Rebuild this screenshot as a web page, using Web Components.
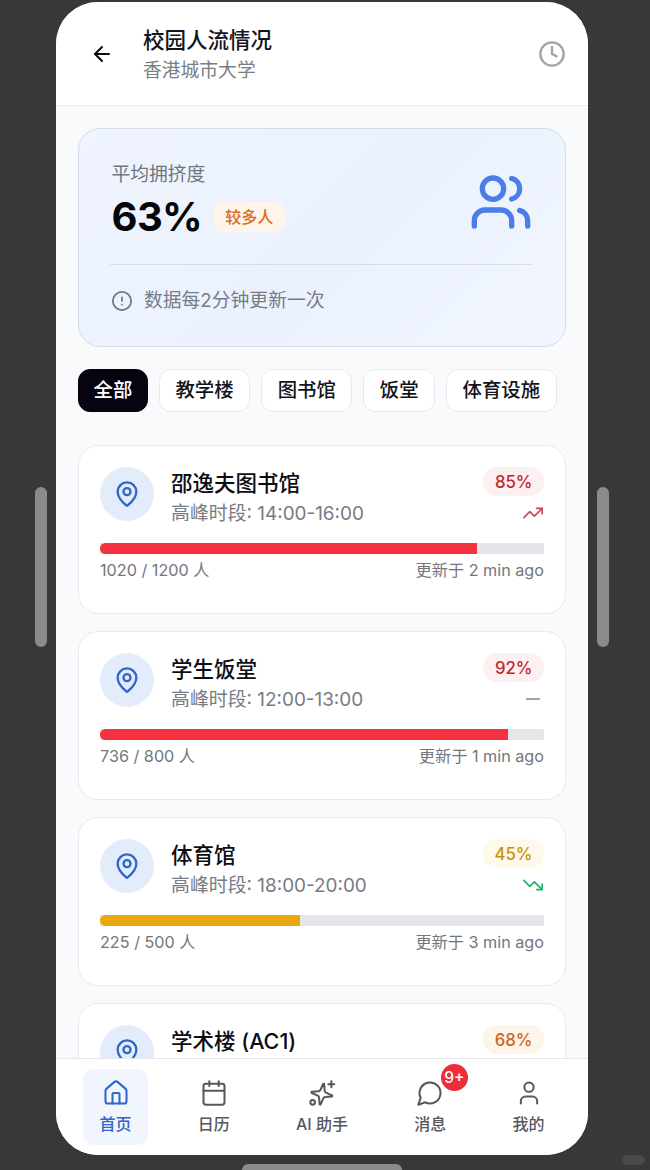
<!DOCTYPE html>
<html lang="zh">
<head>
<meta charset="utf-8">
<title>校园人流情况</title>
<style>
    html, body { margin: 0; height: 100%; background: #383838; overflow: hidden; }
    body { font-family: Inter, "Noto Sans CJK SC", sans-serif; }
</style>
</head>
<body>
<phone-stage>
    <campus-header title-text="校园人流情况" sub-text="香港城市大学"></campus-header>
    <summary-card percent="63%" level="较多人" label="平均拥挤度" note="数据每2分钟更新一次"></summary-card>
    <filter-tabs>
        <filter-tab active>全部</filter-tab>
        <filter-tab>教学楼</filter-tab>
        <filter-tab>图书馆</filter-tab>
        <filter-tab>饭堂</filter-tab>
        <filter-tab>体育设施</filter-tab>
    </filter-tabs>
    <place-card name="邵逸夫图书馆" peak="高峰时段: 14:00-16:00" count="1020 / 1200 人" updated="更新于 2 min ago" percent="85" level="high" trend="up"></place-card>
    <place-card name="学生饭堂" peak="高峰时段: 12:00-13:00" count="736 / 800 人" updated="更新于 1 min ago" percent="92" level="high" trend="flat"></place-card>
    <place-card name="体育馆" peak="高峰时段: 18:00-20:00" count="225 / 500 人" updated="更新于 3 min ago" percent="45" level="mid" trend="down"></place-card>
    <place-card name="学术楼 (AC1)" peak="" count="" updated="" percent="68" level="busy" trend="up"></place-card>
    <nav-bar slot="nav">
        <nav-item icon="home" active>首页</nav-item>
        <nav-item icon="calendar">日历</nav-item>
        <nav-item icon="spark" wide>AI 助手</nav-item>
        <nav-item icon="chat" badge="9+">消息</nav-item>
        <nav-item icon="user">我的</nav-item>
    </nav-bar>
</phone-stage>

<script>
(function (){
    const icons = {
        back: `<path d="M19 12H5"/><path d="m12 19-7-7 7-7"/>`,
        clock: `<circle cx="12" cy="12" r="10"/><path d="M12 6v6l4 2"/>`,
        users: `<path d="M16 21v-2a4 4 0 0 0-4-4H6a4 4 0 0 0-4 4v2"/><circle cx="9" cy="7" r="4"/><path d="M22 21v-2a4 4 0 0 0-3-3.87"/><path d="M16 3.13a4 4 0 0 1 0 7.75"/>`,
        alert: `<circle cx="12" cy="12" r="10"/><path d="M12 8v4"/><path d="M12 16h.01"/>`,
        pin: `<path d="M20 10c0 4.993-5.539 10.193-7.399 11.799a1 1 0 0 1-1.202 0C9.539 20.193 4 14.993 4 10a8 8 0 0 1 16 0"/><circle cx="12" cy="10" r="3"/>`,
        up: `<path d="M22 7 13.5 15.5 8.5 10.5 2 17"/><path d="M16 7h6v6"/>`,
        down: `<path d="M22 17 13.5 8.5 8.5 13.5 2 7"/><path d="M16 17h6v-6"/>`,
        flat: `<path d="M5 12h14"/>`,
        home: `<path d="M15 21v-8a1 1 0 0 0-1-1h-4a1 1 0 0 0-1 1v8"/><path d="M3 10a2 2 0 0 1 .709-1.528l7-6a2 2 0 0 1 2.582 0l7 6A2 2 0 0 1 21 10v9a2 2 0 0 1-2 2H5a2 2 0 0 1-2-2z"/>`,
        calendar: `<path d="M8 2v4"/><path d="M16 2v4"/><rect x="3" y="4" width="18" height="18" rx="2"/><path d="M3 10h18"/>`,
        spark: `<path d="M10.2 15.3a2 2 0 0 0-1.4-1.4l-5.3-1.4a.5.5 0 0 1 0-1l5.3-1.4a2 2 0 0 0 1.4-1.4l1.4-5.2a.5.5 0 0 1 1 0l1.3 5.2a2 2 0 0 0 1.5 1.4l5.2 1.4a.5.5 0 0 1 0 1l-5.2 1.4a2 2 0 0 0-1.5 1.4l-1.3 5.3a.5.5 0 0 1-1 0z" transform="rotate(10 12 12) translate(0 1)"/><path d="M20 2v5"/><path d="M22.5 4.5h-5"/><circle cx="4" cy="20" r="2"/>`,
        chat: `<path d="M7.9 20A9 9 0 1 0 4 16.1L2 22Z"/>`,
        user: `<path d="M19 21v-2a4 4 0 0 0-4-4H9a4 4 0 0 0-4 4v2"/><circle cx="12" cy="7" r="4"/>`
    };

    function svgIcon(name, size, stroke) {
        return `<svg width="${size}" height="${size}" viewBox="0 0 24 24" fill="none" stroke="currentColor" stroke-width="${stroke}" stroke-linecap="round" stroke-linejoin="round">${icons[name]}</svg>`;
    }

    const stageTemplate = document.createElement("template");
    stageTemplate.innerHTML = `
    <style>
        :host {
            display: grid;
            grid-template-columns: 56px 532px 62px;
            grid-template-rows: 1153px 15px;
            padding-top: 2px;
            width: 650px;
            height: 1170px;
            box-sizing: border-box;
            overflow: hidden;
        }

        .side {
            display: flex;
            align-items: flex-start;
            padding-top: 485px;
            box-sizing: border-box;
        }

        .handle {
            width: 12px;
            height: 160px;
            border-radius: 6px;
            background: #8b8b8b;
        }

        .left { padding-left: 35px; }
        .right { padding-left: 9px; }

        .phone {
            display: flex;
            flex-direction: column;
            border-radius: 42px;
            overflow: hidden;
            background: #f9fafc;
        }

        .scroll {
            flex: 1;
            min-height: 0;
            overflow: hidden;
            display: flex;
            flex-direction: column;
        }

        .bottom {
            grid-column: 2;
            padding: 9px 0 0 186px;
        }

        .bottom div {
            width: 160px;
            height: 10px;
            border-radius: 6px 6px 0 0;
            background: #8b8b8b;
        }

        .mark {
            grid-column: 3;
            padding: 0 0 0 34px;
        }

        .mark div {
            width: 23px;
            height: 10px;
            border-radius: 5px;
            background: #4a4a4a;
        }
    </style>
    <div class="side left"><div class="handle"></div></div>
    <div class="phone">
        <div class="scroll"><slot></slot></div>
        <slot name="nav"></slot>
    </div>
    <div class="side right"><div class="handle"></div></div>
    <div class="bottom"><div></div></div>
    <div class="mark"><div></div></div>
    `;

    class PhoneStage extends HTMLElement {
        constructor() {
            super();
            this.attachShadow({ mode: "open" });
            this.shadowRoot.appendChild(stageTemplate.content.cloneNode(true));
        }
    }

    class CampusHeader extends HTMLElement {
        constructor() {
            super();
            this.attachShadow({ mode: "open" });
            this.shadowRoot.innerHTML = `
            <style>
                :host {
                    display: flex;
                    align-items: center;
                    flex: none;
                    height: 103px;
                    box-sizing: content-box;
                    border-bottom: 1px solid #e8e9ec;
                    background: #fff;
                    padding: 0 22px 0 34px;
                }

                .back { display: flex; color: #0b0b12; margin-right: 29px; }
                .text { flex: 1; padding-top: 4px; }
                .title { font-size: 21.5px; line-height: 28px; font-weight: 500; color: #14141c; }
                .sub { font-size: 18.8px; line-height: 28px; color: #7a7d85; margin-top: 3px; }
                .clock { display: flex; color: #a3a3a3; }
            </style>
            <span class="back">${svgIcon("back", 24, 2)}</span>
            <div class="text">
                <div class="title">${this.getAttribute("title-text")}</div>
                <div class="sub">${this.getAttribute("sub-text")}</div>
            </div>
            <span class="clock">${svgIcon("clock", 28, 2)}</span>
            `;
        }
    }

    class SummaryCard extends HTMLElement {
        constructor() {
            super();
            this.attachShadow({ mode: "open" });
            this.shadowRoot.innerHTML = `
            <style>
                :host {
                    display: block;
                    flex: none;
                    margin: 22px 22px 0;
                    height: 219px;
                    box-sizing: border-box;
                    padding: 33px 32px 0 32px;
                    border: 1px solid #d3dcee;
                    border-radius: 22px;
                    background: linear-gradient(135deg, #eff4fd, #ebf2fd 55%, #f2f6fe);
                }

                .top { display: flex; justify-content: space-between; height: 102px; border-bottom: 1px solid #d5deeb; margin-left: -1px; padding-left: 1.5px; }
                .label { font-size: 18.8px; line-height: 26px; color: #70757f; }
                .row { display: flex; align-items: center; gap: 11px; margin-top: 4px; }
                .percent { font-size: 40px; line-height: 50px; font-weight: 700; color: #05060c; letter-spacing: -0.6px; }
                .level { font-size: 16px; line-height: 30px; font-weight: 500; color: #dc6a1e; background: #fdf5ea; border-radius: 10px; padding: 0 12px; }
                .users { display: flex; color: #4a7de8; margin: 8px 0.5px 0 0; }
                .note { display: flex; align-items: center; gap: 11px; margin-top: 23px; font-size: 18.8px; line-height: 26px; color: #777c87; }
                .note span { display: flex; color: #6f7580; }
            </style>
            <div class="top">
                <div>
                    <div class="label">${this.getAttribute("label")}</div>
                    <div class="row">
                        <div class="percent">${this.getAttribute("percent")}</div>
                        <div class="level">${this.getAttribute("level")}</div>
                    </div>
                </div>
                <span class="users">${svgIcon("users", 64, 2)}</span>
            </div>
            <div class="note"><span>${svgIcon("alert", 22, 1.9)}</span>${this.getAttribute("note")}</div>
            `;
        }
    }

    class FilterTabs extends HTMLElement {
        constructor() {
            super();
            this.attachShadow({ mode: "open" });
            this.shadowRoot.innerHTML = `
            <style>
                :host {
                    display: flex;
                    flex: none;
                    gap: 11px;
                    margin: 22px 22px 33px;
                }
            </style>
            <slot></slot>
            `;
        }
    }

    class FilterTab extends HTMLElement {
        constructor() {
            super();
            this.attachShadow({ mode: "open" });
            this.shadowRoot.innerHTML = `
            <style>
                :host {
                    display: block;
                    height: 43px;
                    box-sizing: border-box;
                    padding: 0 15.5px;
                    border: 1px solid #e8e9ee;
                    border-radius: 12px;
                    background: #fff;
                    color: #14141c;
                    font-size: 19.4px;
                    line-height: 41px;
                    font-weight: 500;
                }

                :host([active]) {
                    padding: 0 14.6px;
                    background: #05040f;
                    border-color: #05040f;
                    color: #fff;
                }
            </style>
            <slot></slot>
            `;
        }
    }

    const levels = {
        high: { bar: "#f5303f", text: "#c2272f", bg: "#fdf0f1" },
        mid: { bar: "#e8a90c", text: "#c9930f", bg: "#fef9e8" },
        busy: { bar: "#ee7a1f", text: "#d0622a", bg: "#fdf4ea" }
    };

    const trends = {
        up: "#c8475a",
        down: "#20b363",
        flat: "#85878c"
    };

    class PlaceCard extends HTMLElement {
        constructor() {
            super();
            this.attachShadow({ mode: "open" });
            const level = levels[this.getAttribute("level")];
            const trend = this.getAttribute("trend");
            const percent = this.getAttribute("percent");
            this.shadowRoot.innerHTML = `
            <style>
                :host {
                    display: block;
                    flex: none;
                    margin: 0 22px 17px;
                    height: 169px;
                    box-sizing: border-box;
                    padding: 21px 21px 0;
                    border: 1px solid #e8e9ee;
                    border-radius: 20px;
                    background: #fff;
                }

                .top { display: flex; height: 76px; }
                .pin { display: flex; align-items: center; justify-content: center; width: 54px; height: 54px; flex: none; border-radius: 50%; background: #e3ecfb; color: #2f66cc; margin-right: 17px; }
                .text { flex: 1; }
                .name { font-size: 21.5px; line-height: 30px; font-weight: 500; color: #0c0c14; margin-top: 1px; }
                .peak { font-size: 18.9px; line-height: 30px; color: #787b83; margin-top: 1px; }
                .side { display: flex; flex-direction: column; align-items: flex-end; }
                .pill { font-size: 16.8px; height: 29px; line-height: 31px; font-weight: 500; color: ${level.text}; background: ${level.bg}; border-radius: 14px; padding: 0 11.5px; }
                .trend { display: flex; color: ${trends[trend]}; margin-top: 6px; }
                .bar { height: 11px; background: #e5e6e9; border-radius: 0 1px 1px 0; }
                .fill { height: 100%; width: ${percent}%; background: ${level.bar}; border-radius: 5.5px 0 0 5.5px; }
                .foot { display: flex; justify-content: space-between; font-size: 16.2px; line-height: 24px; color: #73767d; margin-top: 4px; }
            </style>
            <div class="top">
                <span class="pin">${svgIcon("pin", 28, 2)}</span>
                <div class="text">
                    <div class="name">${this.getAttribute("name")}</div>
                    <div class="peak">${this.getAttribute("peak")}</div>
                </div>
                <div class="side">
                    <div class="pill">${percent}%</div>
                    <span class="trend">${svgIcon(trend, 22, 1.8)}</span>
                </div>
            </div>
            <div class="bar"><div class="fill"></div></div>
            <div class="foot"><span>${this.getAttribute("count")}</span><span>${this.getAttribute("updated")}</span></div>
            `;
        }
    }

    class NavBar extends HTMLElement {
        constructor() {
            super();
            this.attachShadow({ mode: "open" });
            this.shadowRoot.innerHTML = `
            <style>
                :host {
                    display: flex;
                    flex: none;
                    justify-content: space-between;
                    height: 97px;
                    box-sizing: border-box;
                    padding: 10px 27px 0;
                    border-top: 1px solid #e6e7ea;
                    background: #fff;
                }
            </style>
            <slot></slot>
            `;
        }
    }

    class NavItem extends HTMLElement {
        constructor() {
            super();
            this.attachShadow({ mode: "open" });
            const badge = this.getAttribute("badge");
            this.shadowRoot.innerHTML = `
            <style>
                :host {
                    display: flex;
                    flex-direction: column;
                    align-items: center;
                    position: relative;
                    width: 65px;
                    height: 76px;
                    box-sizing: border-box;
                    padding-top: 10px;
                    border-radius: 11px;
                    color: #55585f;
                    font-size: 16px;
                    line-height: 24px;
                    font-weight: 500;
                }

                :host([wide]) { width: 85px; }
                :host([active]) { background: #f1f5fe; color: #2f66cc; }
                .icon { display: flex; height: 30px; margin-bottom: 3px; }
                .badge {
                    position: absolute;
                    top: -5px;
                    left: 43px;
                    width: 27px;
                    height: 27px;
                    border-radius: 50%;
                    background: #ee2d3a;
                    color: #fff;
                    font-size: 15.5px;
                    line-height: 27px;
                    text-align: center;
                }
            </style>
            <span class="icon">${svgIcon(this.getAttribute("icon"), 28, 1.75)}</span>
            <slot></slot>
            ${badge ? `<span class="badge">${badge}</span>` : ""}
            `;
        }
    }

    customElements.define("phone-stage", PhoneStage);
    customElements.define("campus-header", CampusHeader);
    customElements.define("summary-card", SummaryCard);
    customElements.define("filter-tabs", FilterTabs);
    customElements.define("filter-tab", FilterTab);
    customElements.define("place-card", PlaceCard);
    customElements.define("nav-bar", NavBar);
    customElements.define("nav-item", NavItem);
})();
</script>
</body>
</html>
